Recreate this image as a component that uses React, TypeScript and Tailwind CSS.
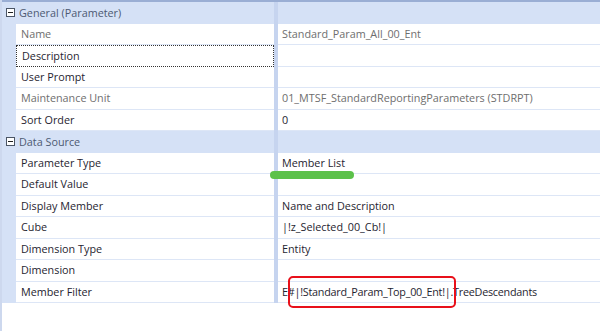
import React from "react";

type Row =
  | { kind: "cat"; title: string }
  | { kind: "prop"; label: string; value?: string; muted?: boolean; focused?: boolean; tight?: boolean };

const rows: Row[] = [
  { kind: "cat", title: "General (Parameter)" },
  { kind: "prop", label: "Name", value: "Standard_Param_All_00_Ent", muted: true },
  { kind: "prop", label: "Description", focused: true },
  { kind: "prop", label: "User Prompt" },
  { kind: "prop", label: "Maintenance Unit", value: "01_MTSF_StandardReportingParameters (STDRPT)", muted: true },
  { kind: "prop", label: "Sort Order", value: "0" },
  { kind: "cat", title: "Data Source" },
  { kind: "prop", label: "Parameter Type", value: "Member List" },
  { kind: "prop", label: "Default Value" },
  { kind: "prop", label: "Display Member", value: "Name and Description" },
  { kind: "prop", label: "Cube", value: "|!z_Selected_00_Cb!|" },
  { kind: "prop", label: "Dimension Type", value: "Entity" },
  { kind: "prop", label: "Dimension" },
  { kind: "prop", label: "Member Filter", value: "E#|!Standard_Param_Top_00_Ent!|.TreeDescendants", tight: true },
];

function Minus() {
  return (
    <span className="w-[9px] h-[9px] border border-[#4b5565] bg-white flex items-center justify-center">
      <span className="w-[5px] h-[1px] bg-[#222]" />
    </span>
  );
}

export default function App() {
  return (
    <div className="relative w-[600px] h-[331px] bg-white overflow-hidden border-l-2 border-[#cdd8ee] font-['Open_Sans','Noto_Sans',sans-serif] text-[10.8px]">
      <div className="border-t-2 border-[#9aaed4]">
        {rows.map((r, i) =>
          r.kind === "cat" ? (
            <div key={i} className="flex items-center h-[21.5px] bg-[#d5e1f6]">
              <div className="w-[17px] pl-[4px] flex items-center">
                <Minus />
              </div>
              <span className="w-[255px] text-[#4d5a73]">{r.title}</span>
              <div className="w-[4px] h-full bg-[#c6d4ef]" />
            </div>
          ) : (
            <div key={i} className="flex h-[21.5px]">
              <div className="w-[14px] bg-[#d5e1f6]" />
              <div
                className={
                  "w-[258px] flex items-center pl-[5px] " +
                  (r.focused ? "border border-dotted border-[#333]" : "border-b border-[#dde6f6]") +
                  (r.muted ? " text-[#6e6e6e]" : " text-[#1f2430]")
                }
              >
                {r.label}
              </div>
              <div className="w-[4px] bg-[#c6d4ef]" />
              <div
                className={
                  "flex-1 flex items-center pl-[4px] border-b border-[#dde6f6] whitespace-nowrap " +
                  (r.muted ? "text-[#6e6e6e]" : "text-[#1f2430]") +
                  (r.tight ? " tracking-[-0.25px]" : "")
                }
              >
                {r.value}
              </div>
            </div>
          )
        )}
      </div>
      <div className="absolute left-[268px] top-[171px] w-[84px] h-[8px] rounded-full bg-[#5cc14a]" />
      <div className="absolute left-[286px] top-[276px] w-[168px] h-[32px] rounded-[5px] border-[2.5px] border-[#e8101a]" />
    </div>
  );
}
